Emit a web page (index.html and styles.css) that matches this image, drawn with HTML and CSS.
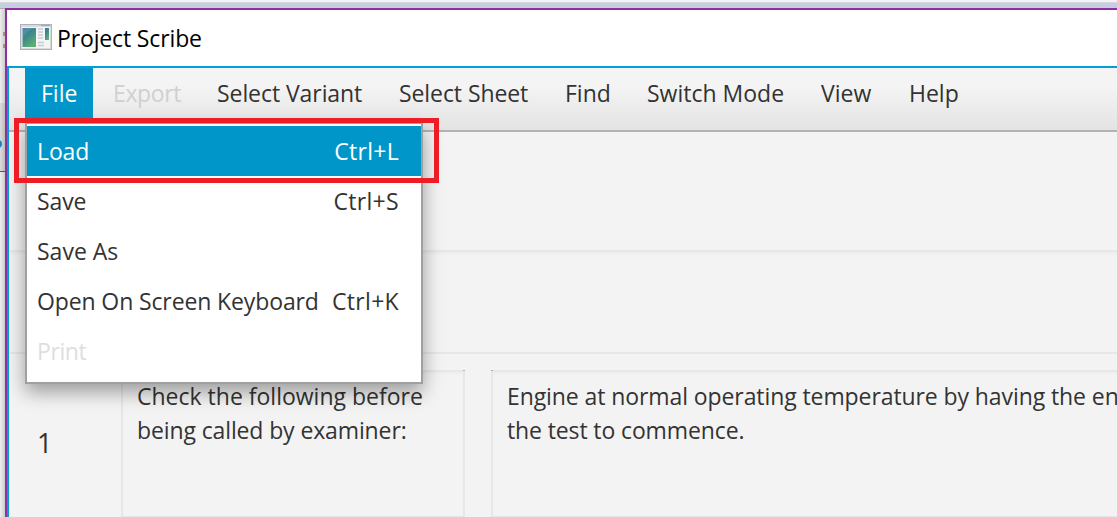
FILE: index.html
```html
<!DOCTYPE html>
<html lang="en">
<head>
<meta charset="utf-8">
<title>Project Scribe</title>
<link rel="stylesheet" href="styles.css">
</head>
<body>
<div class="desktop">
  <div class="behind"><span class="behind-mark upper"></span><span class="behind-mark lower"></span><span class="behind-block"></span><span class="behind-dot"></span></div>
  <div class="window">
    <header class="titlebar">
      <svg class="app-icon" width="32" height="26" viewBox="0 0 32 26">
        <defs>
          <linearGradient id="pane" x1="0" y1="0" x2=".6" y2="1"><stop offset="0" stop-color="#3c72a8"/><stop offset=".5" stop-color="#3f8b88"/><stop offset="1" stop-color="#5fae72"/></linearGradient>
        </defs>
        <rect x=".5" y=".5" width="31" height="25" fill="#d8dbde" stroke="#adb3b8"/>
        <path d="M21 1.500h9" stroke="#a0a8b0"/>
        <rect x="2" y="3" width="28" height="21" fill="#f3f4f5"/>
        <rect x="2.500" y="4" width="13.500" height="19" fill="url(#pane)"/>
        <path d="M2.500 14Q7 5 16 4H2.500z" fill="#fff" opacity=".12"/>
        <path d="M18 5h5M18 8h5M18 11h5M18 14h5M18 18.500h6M18 21.500h6" stroke="#c9cdd0" stroke-width="1.500"/>
        <rect x="25" y="4" width="4" height="12" fill="url(#pane)"/>
      </svg>
      <span class="title">Project Scribe</span>
    </header>
    <div class="client">
      <nav class="menubar">
        <span class="item file">File</span><span class="item export">Export</span><span class="item variant">Select Variant</span><span class="item sheet">Select Sheet</span><span class="item find">Find</span><span class="item mode">Switch Mode</span><span class="item view">View</span><span class="item help">Help</span>
      </nav>
      <main class="content">
        <section class="band first"></section>
        <section class="band second"></section>
        <section class="row">
          <div class="number">1</div>
          <div class="cell check"><div>Check the following before</div><div class="tight">being called by examiner:</div></div>
          <div class="cell engine"><div class="long">Engine at normal operating temperature by having the en</div><div class="tight">the test to commence.</div></div>
        </section>
      </main>
    </div>
  </div>
  <div class="dropdown">
    <div class="option selected"><span class="tight">Load</span><span class="key">Ctrl+L</span></div>
    <div class="option"><span class="tight">Save</span><span class="key">Ctrl+S</span></div>
    <div class="option"><span>Save As</span></div>
    <div class="option"><span class="tight">Open On Screen Keyboard</span><span class="key">Ctrl+K</span></div>
    <div class="option disabled"><span class="print">Print</span></div>
  </div>
  <div class="highlight"></div>
</div>
</body>
</html>
```
FILE: styles.css
```css
* { box-sizing: border-box; }
body { margin: 0; overflow: hidden; }
.desktop {
  position: relative; width: 1117px; height: 517px; overflow: hidden;
  padding: 8px 0 0 5px;
  background: linear-gradient(#f2f3f5 0 2px, #d5d9df 2px 3px, #c5cfe0 3px 8px, #eee 8px);
  font: 23px/34px "Open Sans", "Noto Sans", sans-serif; color: #333; white-space: nowrap;
}
.behind { position: absolute; left: 0; top: 8px; width: 5px; height: 509px; overflow: hidden; background: linear-gradient(90deg, #eee, #ccc); border-top: 1px solid #aaa; }
.behind-mark { position: absolute; left: 3px; width: 2px; height: 4px; background: #a8937c; }
.upper { top: 23px; }
.lower { top: 35px; }
.behind-block { position: absolute; left: 0; top: 94px; width: 5px; height: 69px; background: linear-gradient(90deg, #dcdcdc, #bdbdbd); border-bottom: 1px solid #555; }
.behind-dot { position: absolute; left: -6px; top: 131px; width: 8px; height: 8px; border-radius: 50%; background: #1683c4; }
.window { width: 1130px; height: 520px; border: 2px solid #902ea3; background: #fff; }
.titlebar { display: flex; align-items: center; height: 56px; padding-left: 13px; color: #000; }
.app-icon { flex: none; margin-top: -3px; }
.title { margin: 0 0 0 5px; letter-spacing: -.14px; }
.client { height: 460px; border: 2px solid #009fd6; }
.menubar { display: flex; height: 64px; padding-left: 16px; border-bottom: 2px solid #b3b3b3; background: linear-gradient(#f4f4f4 30%, #e3e3e3); }
.item { flex: none; padding: 8px 0 0 18px; }
.file { width: 68px; padding-left: 16px; color: #fff; background: #0096c9; }
.export { width: 106px; padding-left: 20px; color: #d0d0d0; letter-spacing: -.4px; }
.variant { width: 182px; letter-spacing: -.07px; }
.sheet { width: 164px; letter-spacing: -.08px; }
.find { width: 84px; padding-left: 20px; }
.mode { width: 174px; }
.view { width: 86px; }
.help { padding-left: 20px; }
.content { height: 400px; background: #f3f3f3; }
.band { border-bottom: 2px solid #e7e7e7; }
.first { height: 120px; }
.second { height: 102px; box-shadow: inset 0 2px 2px #ededed; }
.row { display: flex; padding-top: 16px; }
.number { flex: none; width: 112px; padding: 56px 0 0 28px; font-size: 27px; }
.cell { position: relative; flex: none; height: 148px; padding: 7px 0 0 14px; border: 2px solid #e7e7e7; box-shadow: inset 0 2px 2px #eee; }
.cell::after { content: ""; position: absolute; top: -2px; width: 2px; height: 1px; background: #b0b0b0; }
.check { width: 344px; margin-right: 26px; }
.check::after { right: -2px; }
.engine { width: 660px; }
.engine::after { left: -2px; }
.tight { letter-spacing: -.12px; }
.long { letter-spacing: -.09px; }
.dropdown {
  position: absolute; left: 25px; top: 122px; width: 398px; height: 262px; padding-top: 2px;
  border: 2px solid #a0a0a0; background: #fff; box-shadow: 0 8px 18px rgba(0, 0, 0, .36);
}
.option { display: flex; align-items: center; height: 50px; padding: 0 22px 0 10px; }
.selected { color: #fff; background: #0096c9; }
.disabled { color: #dedede; }
.print { letter-spacing: -.4px; }
.key { margin-left: auto; letter-spacing: .3px; }
.highlight { position: absolute; left: 14px; top: 118px; width: 425px; height: 65px; border: 5px solid #ee1c25; }
```
